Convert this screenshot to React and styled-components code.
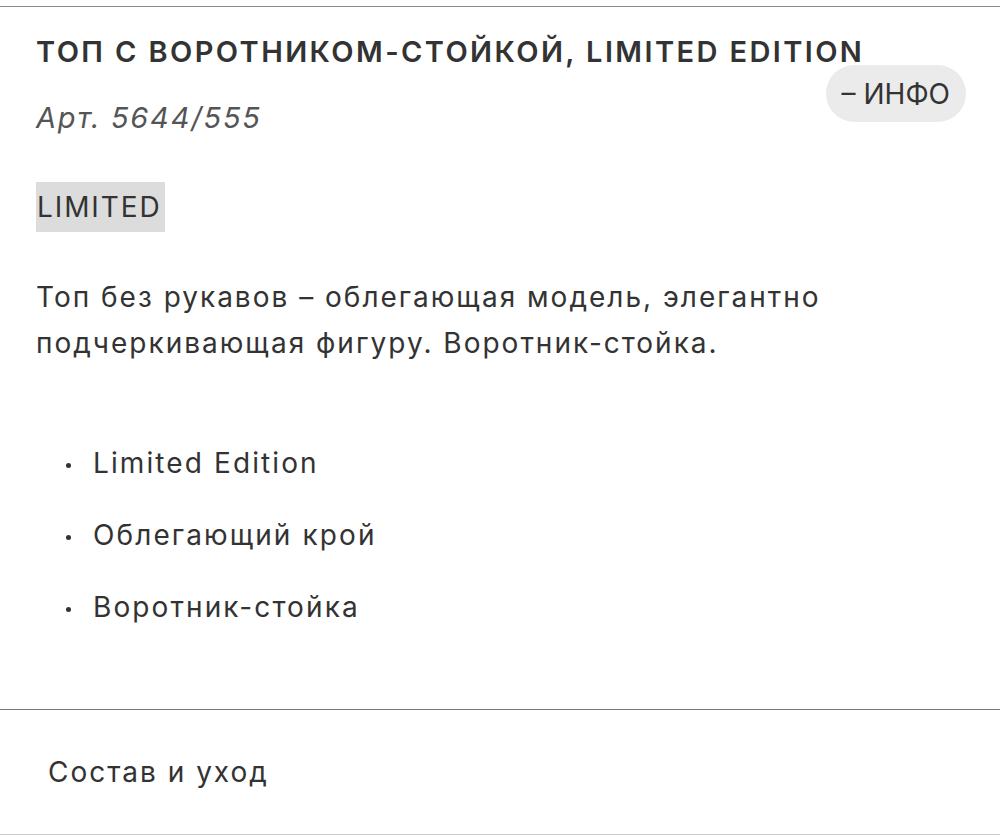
import React from "react";
import styled, { createGlobalStyle } from "styled-components";

const Global = createGlobalStyle`
  html, body { margin: 0; padding: 0; background: #fff; }
  body { font-family: Inter, "Noto Sans", sans-serif; color: #333; }
  * { box-sizing: border-box; }
`;

const Page = styled.div`
  padding-top: 6px;
  width: 1000px;
`;

const InfoSection = styled.section`
  border-top: 1px solid #8a8a8a;
  padding: 28px 34px 79px 36px;
`;

const Header = styled.div`
  display: grid;
  grid-template-columns: 1fr auto;
  row-gap: 32px;
`;

const Title = styled.h1`
  grid-column: 1 / -1;
  margin: 0;
  font-size: 29px;
  line-height: 34px;
  font-weight: 600;
  letter-spacing: 2.4px;
  color: #333;
  white-space: nowrap;
`;

const Article = styled.div`
  font-size: 29px;
  line-height: 34px;
  font-style: italic;
  letter-spacing: 1.8px;
  color: #555;
`;

const InfoButton = styled.button`
  align-self: start;
  margin-top: -36px;
  height: 57px;
  padding: 0 16px;
  border: none;
  border-radius: 29px;
  background: #ebebeb;
  font-family: inherit;
  font-size: 28px;
  color: #333;
`;

const Tag = styled.span`
  display: inline-block;
  margin-top: 47px;
  padding: 0 3px 0 1px;
  background: #dcdcdc;
  font-size: 28px;
  line-height: 50px;
  letter-spacing: 1.9px;
  color: #333;
`;

const Description = styled.p`
  margin: 42px 0 0;
  font-size: 28px;
  line-height: 46px;
  letter-spacing: 2px;
  color: #333;
`;

const Features = styled.ul`
  list-style: none;
  margin: 74px 0 0;
  padding: 0 0 0 57px;
  display: flex;
  flex-direction: column;
  gap: 26px;
`;

const Feature = styled.li`
  position: relative;
  font-size: 28px;
  line-height: 46px;
  letter-spacing: 2.1px;
  color: #333;
  &::before {
    content: "";
    position: absolute;
    left: -27px;
    top: 23px;
    width: 5px;
    height: 5px;
    border-radius: 50%;
    background: #333;
  }
`;

const CareRow = styled.section`
  border-top: 1px solid #777;
  border-bottom: 1px solid #ccc;
  padding: 39px 48px;
  font-size: 28px;
  line-height: 46px;
  letter-spacing: 2px;
  color: #333;
`;

export default function App() {
  return (
    <Page>
      <Global />
      <InfoSection>
        <Header>
          <Title>ТОП С ВОРОТНИКОМ-СТОЙКОЙ, LIMITED EDITION</Title>
          <Article>Арт. 5644/555</Article>
          <InfoButton>– ИНФО</InfoButton>
        </Header>
        <Tag>LIMITED</Tag>
        <Description>
          Топ без рукавов – облегающая модель, элегантно
          <br />
          подчеркивающая фигуру. Воротник-стойка.
        </Description>
        <Features>
          <Feature>Limited Edition</Feature>
          <Feature>Облегающий крой</Feature>
          <Feature>Воротник-стойка</Feature>
        </Features>
      </InfoSection>
      <CareRow>Состав и уход</CareRow>
    </Page>
  );
}
